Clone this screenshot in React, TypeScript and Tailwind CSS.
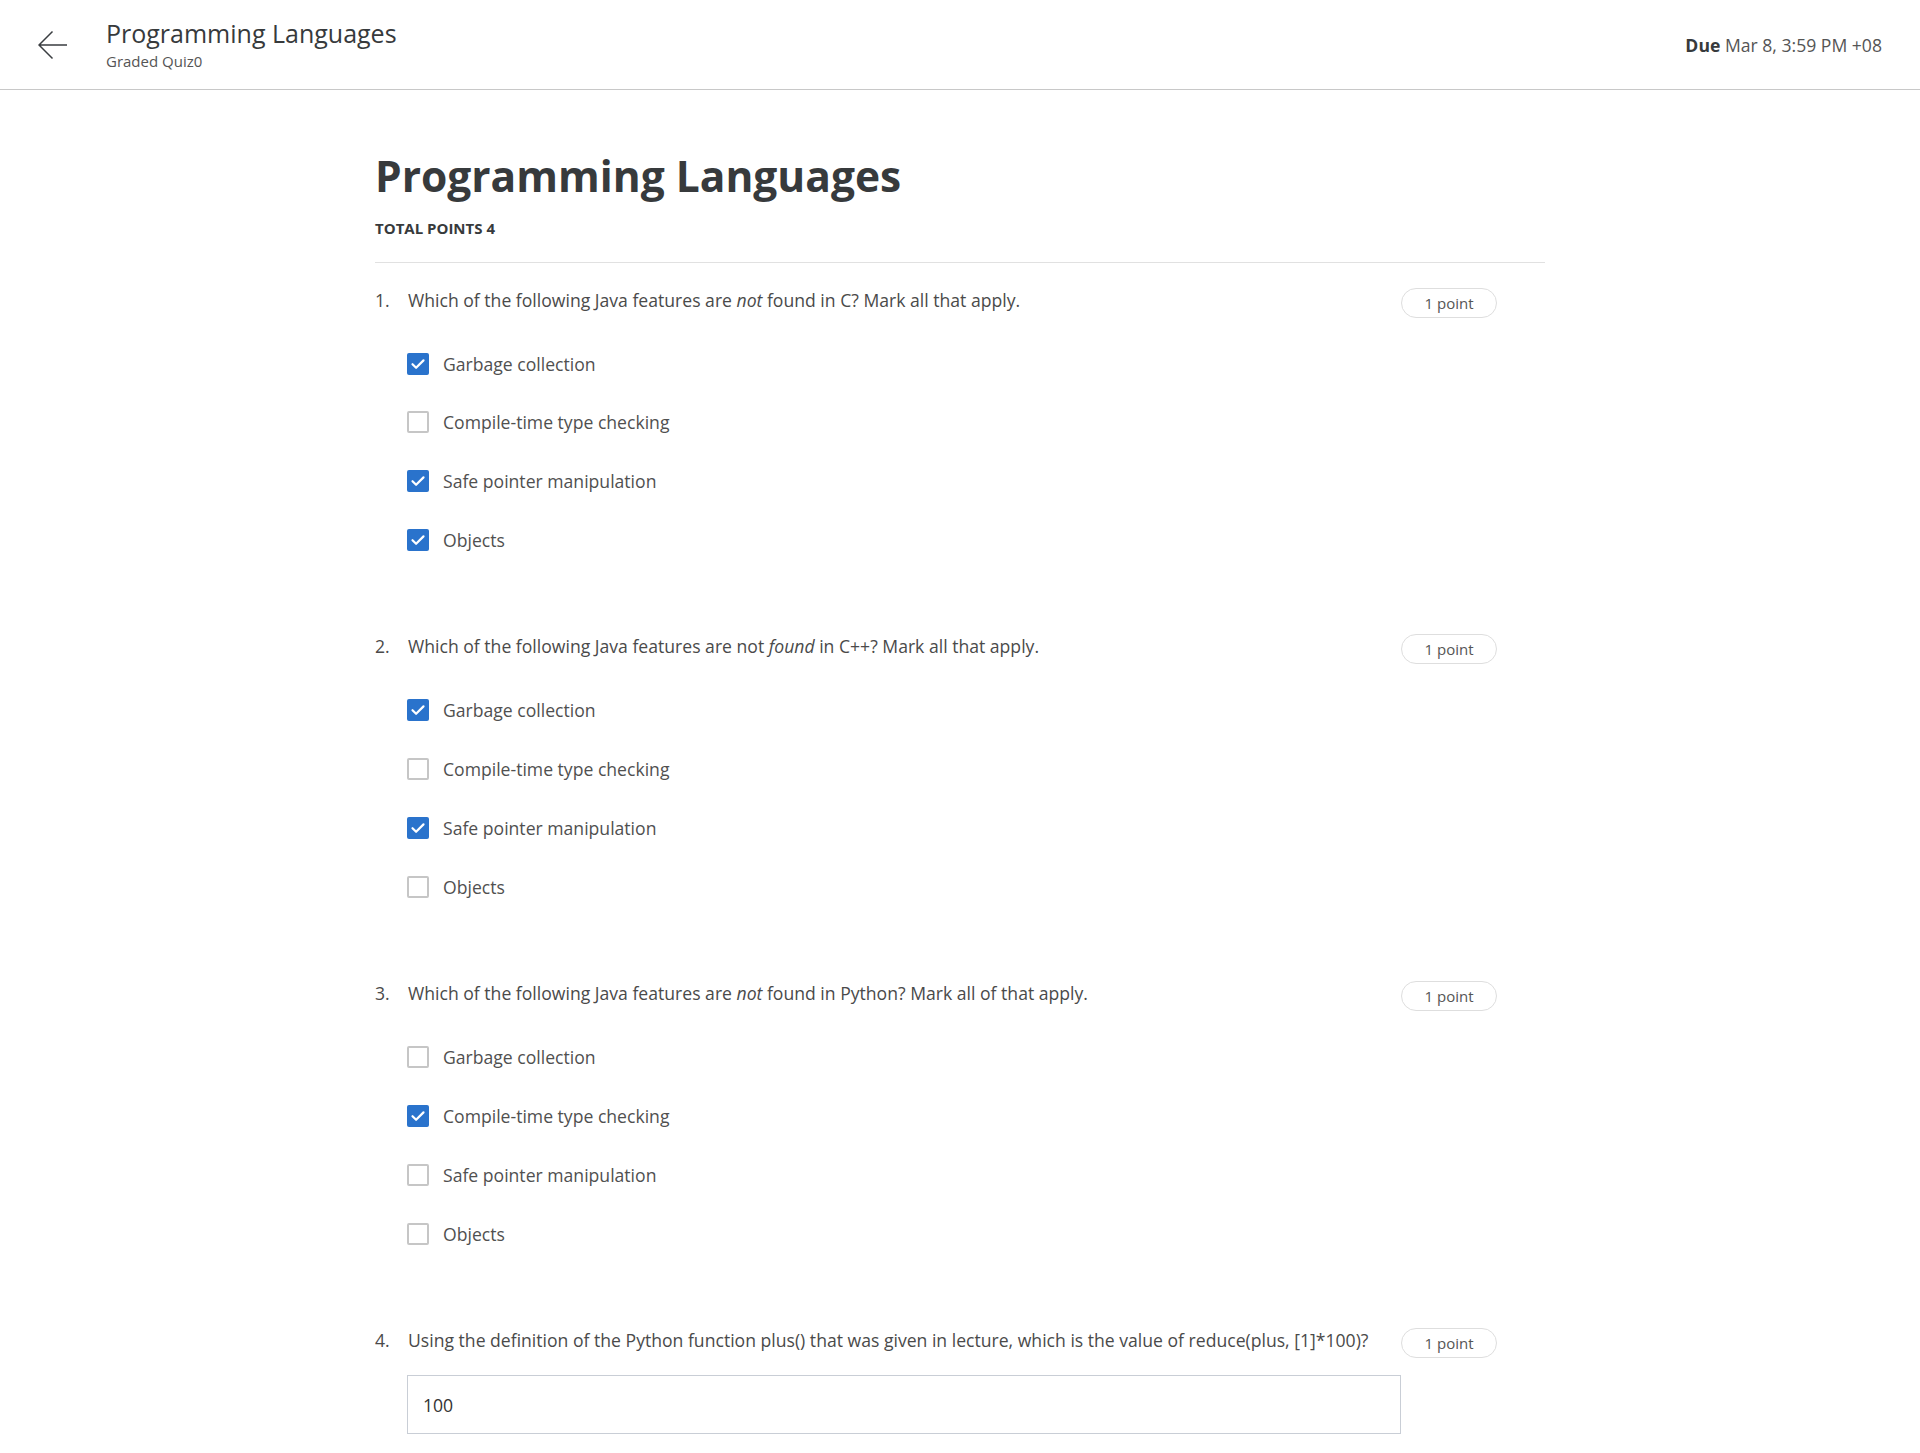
import React from 'react';

type Question = {
  num: number;
  text: React.ReactNode;
  options?: { label: string; checked: boolean }[];
  answer?: string;
};

const questions: Question[] = [
  {
    num: 1,
    text: (
      <>
        Which of the following Java features are <em>not</em> found in C? Mark all that apply.
      </>
    ),
    options: [
      { label: 'Garbage collection', checked: true },
      { label: 'Compile-time type checking', checked: false },
      { label: 'Safe pointer manipulation', checked: true },
      { label: 'Objects', checked: true },
    ],
  },
  {
    num: 2,
    text: (
      <>
        Which of the following Java features are not <em>found</em> in C++? Mark all that apply.
      </>
    ),
    options: [
      { label: 'Garbage collection', checked: true },
      { label: 'Compile-time type checking', checked: false },
      { label: 'Safe pointer manipulation', checked: true },
      { label: 'Objects', checked: false },
    ],
  },
  {
    num: 3,
    text: (
      <>
        Which of the following Java features are <em>not</em> found in Python? Mark all of that apply.
      </>
    ),
    options: [
      { label: 'Garbage collection', checked: false },
      { label: 'Compile-time type checking', checked: true },
      { label: 'Safe pointer manipulation', checked: false },
      { label: 'Objects', checked: false },
    ],
  },
  {
    num: 4,
    text: 'Using the definition of the Python function plus() that was given in lecture, which is the value of reduce(plus, [1]*100)?',
    answer: '100',
  },
];

const Checkbox = ({ checked }: { checked: boolean }) =>
  checked ? (
    <span className="flex h-[22px] w-[22px] shrink-0 items-center justify-center rounded-[2px] bg-[#2a73cc]">
      <svg width="16" height="16" viewBox="0 0 16 16" fill="none">
        <path d="M2.5 8.2l3.6 3.6L13.5 4.4" stroke="#fff" strokeWidth="2.2" strokeLinecap="round" strokeLinejoin="round" />
      </svg>
    </span>
  ) : (
    <span className="h-[22px] w-[22px] shrink-0 rounded-[2px] border-2 border-[#c6c6c6] bg-white" />
  );

const QuestionBlock = ({ q }: { q: Question }) => (
  <div className="pr-[48px]">
    <div className="flex h-[30px] items-center">
      <span className="mb-[3px] w-[33px] shrink-0">{q.num}.</span>
      <p className="mb-[3px] flex-1">{q.text}</p>
      <span className="mt-[3px] flex h-[30px] w-[96px] shrink-0 items-center justify-center rounded-full border border-[#dedede] text-[15px] text-[#555]">
        1 point
      </span>
    </div>
    {q.options && (
      <div className="ml-[32px] mt-[34.5px] flex flex-col gap-[32.8px]">
        {q.options.map((o) => (
          <label key={o.label} className="flex h-[26px] items-center gap-[14px] text-[#505050]">
            <Checkbox checked={o.checked} />
            <span>{o.label}</span>
          </label>
        ))}
      </div>
    )}
    {q.answer && (
      <div className="ml-[32px] mr-[96px] mt-[18.5px] flex h-[59px] items-center border border-[#c9ced6] px-[15px] text-[#333]">
        {q.answer}
      </div>
    )}
  </div>
);

export default function App() {
  return (
    <div className="min-h-screen bg-white text-[#373a3c]" style={{ fontFamily: '"Open Sans", "Noto Sans", sans-serif' }}>
      <header className="flex h-[90px] items-center border-b border-[#c8c8c8] pl-[38px] pr-[38px]">
        <svg width="30" height="30" viewBox="0 0 30 30" fill="none" className="shrink-0">
          <path d="M29 15H1.5M14.5 1.5L1 15l13.5 13.5" stroke="#3a3d40" strokeWidth="1.5" />
        </svg>
        <div className="ml-[38px] flex flex-col">
          <h1 className="text-[25px] leading-[30px] text-[#373a3c]">Programming Languages</h1>
          <span className="mt-[3px] text-[15px] leading-[20px] text-[#555]">Graded Quiz0</span>
        </div>
        <div className="ml-auto mt-[2px] text-[17.6px] text-[#555]">
          <span className="font-bold text-[#373a3c]">Due</span> Mar 8, 3:59 PM +08
        </div>
      </header>

      <main className="mx-auto w-[1170px] pt-[60px] pb-[40px] text-[17.6px] leading-[26px] text-[#4a4a4a]">
        <div className="border-b border-[#e1e1e1] pb-[24px]">
          <h2 className="text-[42.5px] font-bold leading-[52px] text-[#373a3c]">Programming Languages</h2>
          <p className="mt-[16px] text-[15px] font-bold uppercase leading-[20px] text-[#373a3c]">Total points 4</p>
        </div>
        <div className="flex flex-col gap-[80px] pt-[23px]">
          {questions.map((q) => (
            <QuestionBlock key={q.num} q={q} />
          ))}
        </div>
      </main>
    </div>
  );
}
